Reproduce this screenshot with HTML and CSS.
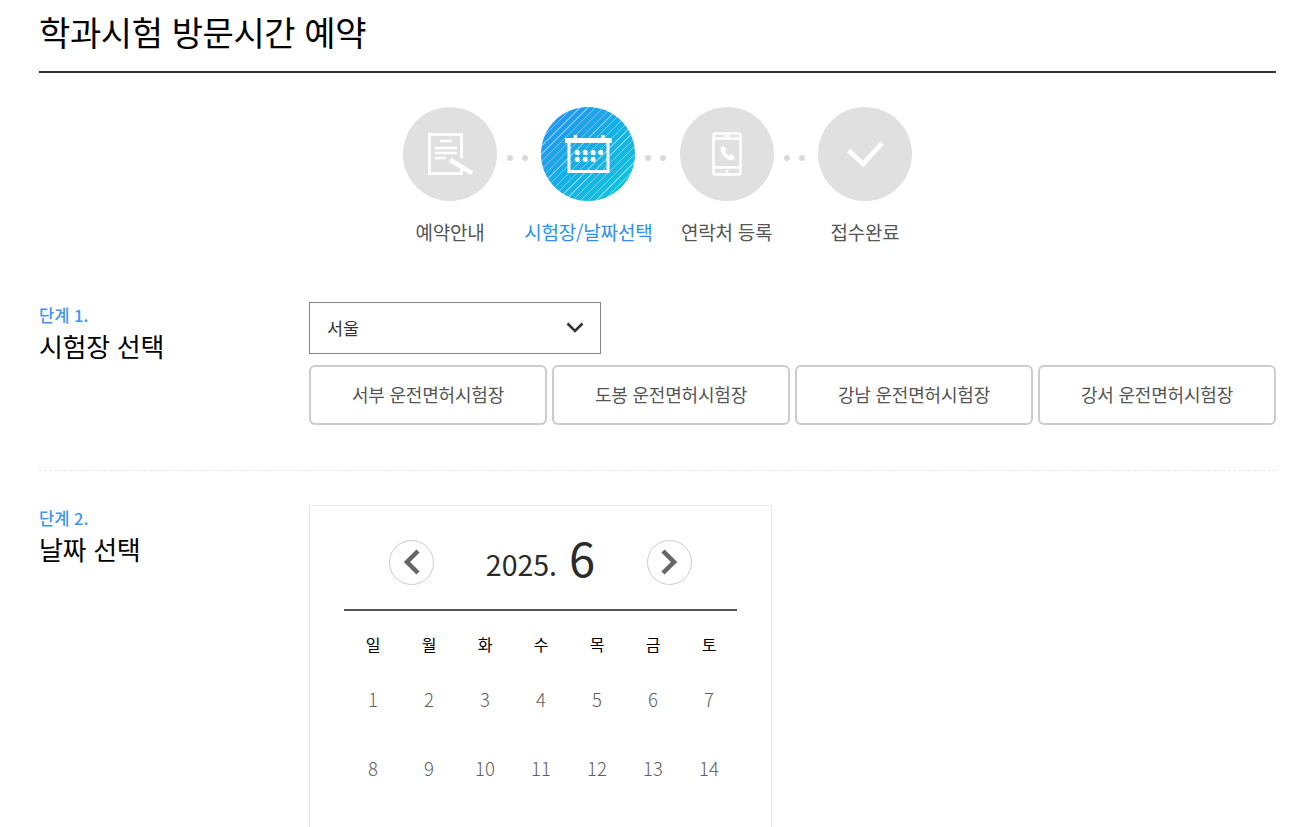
FILE: index.html
```html
<!DOCTYPE html>
<html lang="ko">
<head>
  <meta charset="UTF-8">
  <meta name="viewport" content="width=device-width, initial-scale=1.0">
  <title>학과시험 방문시간 예약</title>
  <link rel="stylesheet" href="styles.css">
</head>
<body>
  <div class="page-container">
    <h1 class="page-title">학과시험 방문시간 예약</h1>

    <!-- Steps -->
    <ol class="steps">
      <li class="step">
        <span class="step-circle">
          <svg width="46" height="44" viewBox="0 0 46 44" fill="none" stroke="#fff" stroke-width="3">
            <path d="M34.5 26V2.5H2.5v39h32V36"/>
            <path d="M13 9h12M8 16h22M8 21h22M8 26h11" stroke-width="2.6"/>
            <path d="M23 28l22 13" stroke-width="4.5"/>
          </svg>
        </span>
        <span class="step-label">예약안내</span>
      </li>
      <li class="step-dots"><i></i><i></i></li>
      <li class="step step-active">
        <span class="step-circle">
          <svg width="47" height="38" viewBox="0 0 47 38" fill="none" stroke="#fff">
            <path d="M4 6h39v30.5H4z" stroke-width="3"/>
            <path d="M0 5.5h47" stroke-width="5"/>
            <path d="M10.5 0v5M38 0v5" stroke-width="3.4"/>
            <g fill="#fff" stroke="none">
              <rect x="10" y="15" width="4.6" height="5" rx="1.4"/>
              <rect x="18" y="15" width="4.6" height="5" rx="1.4"/>
              <rect x="25.8" y="15" width="4.6" height="5" rx="1.4"/>
              <rect x="33.5" y="15" width="4.6" height="5" rx="1.4"/>
              <rect x="10" y="22" width="4.6" height="5" rx="1.4"/>
              <rect x="18" y="22" width="4.6" height="5" rx="1.4"/>
              <rect x="25.8" y="22" width="4.6" height="5" rx="1.4"/>
            </g>
          </svg>
        </span>
        <span class="step-label">시험장/날짜선택</span>
      </li>
      <li class="step-dots"><i></i><i></i></li>
      <li class="step">
        <span class="step-circle">
          <svg width="30" height="44" viewBox="0 0 30 44" fill="none" stroke="#fff" stroke-width="2.5">
            <rect x="1.5" y="1.5" width="27" height="41" rx="2"/>
            <path d="M1.5 6.5h27M1.5 35.5h27"/>
            <path d="M12 4h6" stroke-width="1.5"/>
            <circle cx="15" cy="39.5" r="1.4" fill="#fff" stroke="none"/>
            <path d="M11 14c-2 1-3 3-2 5 1 4 5 8 9 9 2 1 4 0 5-3l-4-3-2 2c-2-1-3-3-4-5l2-2z" fill="#fff" stroke="none"/>
          </svg>
        </span>
        <span class="step-label">연락처 등록</span>
      </li>
      <li class="step-dots"><i></i><i></i></li>
      <li class="step">
        <span class="step-circle">
          <svg width="38" height="28" viewBox="0 0 38 28" fill="none" stroke="#fff" stroke-width="4.5">
            <path d="M2.5 10.5L17 24 36 3"/>
          </svg>
        </span>
        <span class="step-label">접수완료</span>
      </li>
    </ol>

    <!-- Stage 1 -->
    <section class="stage stage-first">
      <div class="stage-head">
        <p class="stage-num">단계 1.</p>
        <h2 class="stage-title">시험장 선택</h2>
      </div>
      <div class="stage-body">
        <div class="select-box">
          <span>서울</span>
          <svg width="18" height="11" viewBox="0 0 18 11" fill="none" stroke="#333" stroke-width="2.6">
            <path d="M1.5 1.5L9 9l7.5-7.5"/>
          </svg>
        </div>
        <div class="center-list">
          <button class="center-btn">서부 운전면허시험장</button>
          <button class="center-btn">도봉 운전면허시험장</button>
          <button class="center-btn">강남 운전면허시험장</button>
          <button class="center-btn">강서 운전면허시험장</button>
        </div>
      </div>
    </section>

    <!-- Stage 2 -->
    <section class="stage">
      <div class="stage-head">
        <p class="stage-num">단계 2.</p>
        <h2 class="stage-title">날짜 선택</h2>
      </div>
      <div class="stage-body">
        <div class="calendar">
          <div class="cal-head">
            <button class="cal-nav">
              <svg width="18" height="26" viewBox="0 0 18 26" fill="none" stroke="#666" stroke-width="4.5">
                <path d="M15 2L4 13l11 11"/>
              </svg>
            </button>
            <div class="cal-month">2025. <strong>6</strong></div>
            <button class="cal-nav">
              <svg width="18" height="26" viewBox="0 0 18 26" fill="none" stroke="#666" stroke-width="4.5">
                <path d="M3 2l11 11L3 24"/>
              </svg>
            </button>
          </div>
          <div class="cal-grid cal-week">
            <span>일</span><span>월</span><span>화</span><span>수</span><span>목</span><span>금</span><span>토</span>
          </div>
          <div class="cal-grid cal-days">
            <span>1</span><span>2</span><span>3</span><span>4</span><span>5</span><span>6</span><span>7</span>
            <span>8</span><span>9</span><span>10</span><span>11</span><span>12</span><span>13</span><span>14</span>
          </div>
        </div>
      </div>
    </section>
  </div>
</body>
</html>
```
FILE: styles.css
```css
* {
  box-sizing: border-box;
}
html, body {
  height: 100%;
  margin: 0;
  overflow: hidden;
}
body {
  font-family: "Noto Sans CJK KR", "Noto Sans", sans-serif;
  background: #fff;
  color: #000;
}
.page-container {
  height: 827px;
  overflow: hidden;
  padding: 0 26px 0 39px;
}
.page-title {
  height: 73px;
  margin: 0;
  border-bottom: 2px solid #333;
  font-size: 34px;
  font-weight: 400;
  letter-spacing: -0.4px;
  line-height: 64px;
}

/* steps */
.steps {
  display: flex;
  justify-content: center;
  margin: 34px 0 0;
  padding: 0;
  list-style: none;
}
.step {
  display: flex;
  flex-direction: column;
  align-items: center;
  width: 94px;
}
.step-circle {
  display: flex;
  align-items: center;
  justify-content: center;
  width: 94px;
  height: 94px;
  border-radius: 50%;
  background: #e0e0e0;
}
.step-active .step-circle {
  background:
    repeating-linear-gradient(135deg, rgba(255,255,255,0.4) 0 1px, transparent 1px 5.5px),
    linear-gradient(135deg, #2490f5, #0ccbd8);
}
.step-label {
  margin-top: 18px;
  font-size: 19px;
  letter-spacing: -0.2px;
  line-height: 26px;
  color: #555;
  white-space: nowrap;
}
.step-active .step-label {
  color: #2e8ff0;
}
.step-dots {
  display: flex;
  justify-content: center;
  gap: 9px;
  width: 44.3px;
  height: 94px;
  padding: 48px 3px 0 0;
}
.step-dots i {
  width: 6px;
  height: 6px;
  border-radius: 50%;
  background: #d9d9d9;
}

/* stages */
.stage {
  display: flex;
  padding-top: 34px;
}
.stage-first {
  margin-top: 32px;
  padding-top: 25px;
  padding-bottom: 45px;
  border-bottom: 1px dashed #e6e6e6;
}
.stage-head {
  width: 270px;
  flex-shrink: 0;
}
.stage-num {
  margin: 0;
  font-size: 16.5px;
  font-weight: 500;
  line-height: 26px;
  color: #3f95f5;
}
.stage-title {
  margin: 0;
  font-size: 26px;
  font-weight: 400;
  letter-spacing: -0.3px;
  line-height: 36px;
}
.stage-body {
  flex: 1;
}
.select-box {
  display: flex;
  align-items: center;
  justify-content: space-between;
  width: 292px;
  height: 52px;
  padding: 0 16px 1px 17px;
  border: 1px solid #848484;
  font-size: 17.5px;
  color: #333;
}
.center-list {
  display: grid;
  grid-template-columns: repeat(4, 1fr);
  gap: 5px;
  margin-top: 11px;
}
.center-btn {
  height: 60px;
  padding: 0 0 2px;
  border: 2px solid #ccc;
  border-radius: 6px;
  background: #fff;
  font-family: inherit;
  font-size: 18px;
  letter-spacing: -0.2px;
  color: #555;
}

/* calendar */
.calendar {
  width: 463px;
  height: 400px;
  padding: 0 34px;
  border: 1px solid #e8e8e8;
}
.cal-head {
  display: flex;
  align-items: center;
  justify-content: space-between;
  height: 105px;
  padding: 9px 45px 0;
  border-bottom: 2px solid #555;
}
.cal-nav {
  display: flex;
  align-items: center;
  justify-content: center;
  width: 45px;
  height: 45px;
  padding: 0;
  border: 1px solid #ccc;
  border-radius: 50%;
  background: #fff;
}
.cal-month {
  padding-bottom: 4px;
  font-size: 28.5px;
  line-height: 45px;
  color: #2b2b2b;
}
.cal-month strong {
  margin-left: 4px;
  font-size: 47px;
  font-weight: 400;
  vertical-align: -1px;
}
.cal-grid {
  display: grid;
  grid-template-columns: repeat(7, 1fr);
  padding-left: 1px;
  text-align: center;
}
.cal-week {
  height: 65px;
  font-size: 16px;
  font-weight: 400;
  line-height: 66px;
}
.cal-days {
  grid-auto-rows: 69px;
  font-size: 18.5px;
  font-weight: 300;
  line-height: 46px;
  color: #5f5f5f;
}
```
